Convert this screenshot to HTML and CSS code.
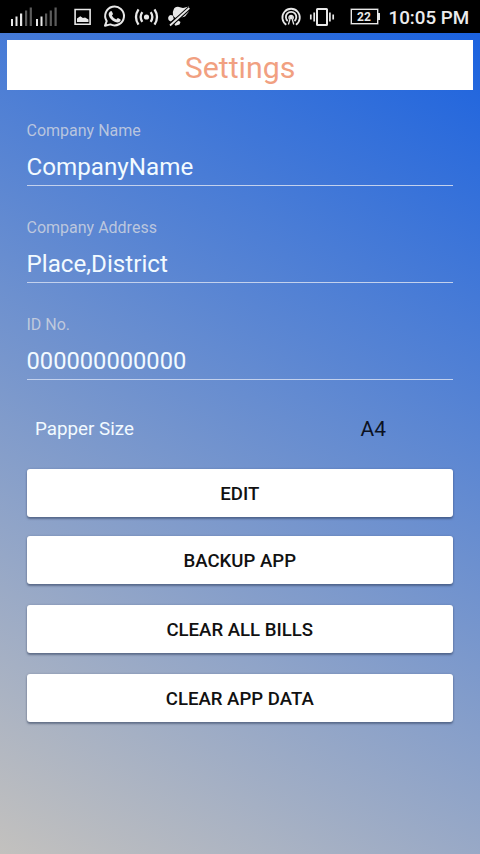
FILE: index.html
```
<!DOCTYPE html>
<html lang="en">
<head>
<meta charset="utf-8">
<title>Settings</title>
<link rel="stylesheet" href="styles.css">
</head>
<body>
<div class="screen">
  <header class="status">
    <svg class="status-icons" width="200" height="33" viewBox="0 0 200 33">
      <g fill="#e8e8e8">
        <path d="M11 19h2v7h-2zM15.500 16.500h2v9.500h-2zM20 13.500h2.200v12.500H20zM36 19h2v7h-2zM40.500 16.500h2v9.500h-2z"/>
        <path fill="#5c5c5c" d="M25 10.500h2.200v15.500H25zM29.700 7.500h2.200v18.500h-2.200zM45 13.500h2.200v12.500H45zM49.700 10.500h2.200v15.500h-2.200zM54.500 7.500h2.200v18.500h-2.200z"/>
        <path fill-rule="evenodd" d="M74.300 8.700h16.600v16.300H74.300zM75.900 10.300v13.100h13.400V10.300z"/>
        <path d="M77 22v-3.500l3.300-2.200 2.600 1.700 2.200-.6 3.400 2.100V22z"/>
      </g>
      <path d="M105 25.700l1.700-4.600a9.400 9.400 0 1 1 3.700 3.300z" fill="none" stroke="#e8e8e8" stroke-width="2" stroke-linejoin="round"/>
      <path d="M110 11.700c.8-.9 1.600-.8 2 0l.9 2c.2.7-.5 1.200-1 1.800 1 1.900 2.500 3.200 4.500 4 .7-.7 1.200-1.700 1.900-1.300l2 1c.7.5.4 1.700-.4 2.400-1.500 1.200-3.300 1-5.200.1-2.700-1.200-4.800-3.300-5.800-6-.5-1.500-.2-3.100 1.100-4z" fill="#e8e8e8"/>
      <circle cx="146.500" cy="17" r="2.600" fill="#e8e8e8"/>
      <path d="M142.300 12.200q-3.300 4.800 0 9.600M138.500 9.300q-5 7.700 0 15.400M150.700 12.200q3.300 4.800 0 9.600M154.500 9.300q5 7.700 0 15.400" fill="none" stroke="#e8e8e8" stroke-width="2.300"/>
      <g fill="#e8e8e8">
        <path d="M173.500 10q1-3.300 4.500-3.200l5 1.200 6-1.500-.5 5.500-3.500 4.500-5.500 1.500q-6 .6-6.500-3-.8-2.700.5-5z"/>
        <path d="M168.300 17q1.500-3.200 4.500-1.500l1 3.500-3 2.500q-3.200-1-2.500-4.500zM173.500 23l3.500-3.500 3.500 2.500-1 2.500-4 1.200z"/>
      </g>
      <path d="M170 25.500l19.500-17.500" stroke="#000" stroke-width="4"/>
      <path d="M170 25.500l19.300-17.500" stroke="#e8e8e8" stroke-width="1.800"/>
    </svg>
    <div class="status-right">
      <svg width="56" height="33" viewBox="280 0 56 33" fill="none" stroke="#e8e8e8" stroke-width="1.800">
        <path d="M286.300 24.700a8.700 8.700 0 1 1 9.600 0M287.700 21a5.200 5.200 0 1 1 6.800 0"/>
        <path d="M288.400 24.500l1.500-5a2.200 2.200 0 1 1 2.400 0l1.500 5" stroke-width="1.300"/>
        <circle cx="291.100" cy="17.500" r="1.700" fill="#e8e8e8" stroke="none"/>
        <rect x="317" y="9" width="10" height="16" rx=".5" stroke-width="2"/>
        <path d="M314.200 12.500v9M310.800 14.500v5M329.900 12.500v9M333.200 14.500v5" stroke-width="1.700"/>
      </svg>
      <span class="battery">22</span>
      <span class="clock">10:05 PM</span>
    </div>
  </header>
  <main class="page">
    <h1 class="title">Settings</h1>
    <div class="form">
      <div class="field"><div class="label">Company Name</div><div class="value">CompanyName</div></div>
      <div class="field"><div class="label">Company Address</div><div class="value">Place,District</div></div>
      <div class="field"><div class="label">ID No.</div><div class="value value-id">000000000000</div></div>
      <div class="paper"><span>Papper Size</span><span class="paper-value">A4</span></div>
      <div class="actions">
        <button class="action action-edit">EDIT</button>
        <button class="action">BACKUP APP</button>
        <button class="action">CLEAR ALL BILLS</button>
        <button class="action">CLEAR APP DATA</button>
      </div>
    </div>
  </main>
</div>
</body>
</html>
```
FILE: styles.css
```
* { box-sizing: border-box; }
body { margin: 0; font-family: Roboto, "Liberation Sans", sans-serif; }
.screen { width: 480px; height: 854px; display: flex; flex-direction: column; overflow: hidden; }
.status { height: 33px; flex: none; background: #000; display: flex; justify-content: space-between; }
.status-icons { display: block; }
.status-right { display: flex; align-items: center; width: 200px; }
.battery {
  position: relative; width: 27px; height: 15px; margin-left: 14.500px;
  border: 1px solid #e8e8e8; box-shadow: 0 0 0 .5px #b5b5b5; color: #e8e8e8;
  font-size: 12px; line-height: 14px; font-weight: 700; text-align: center;
}
.battery::after { content: ""; position: absolute; right: -3px; top: 3px; width: 2px; height: 7px; background: #e8e8e8; }
.clock { margin: 2px 0 0 11px; color: #ececec; font-size: 18.800px; font-weight: 500; white-space: nowrap; }
.page { flex: 1; padding: 7px 7px 0; background: linear-gradient(30.3deg, #c3c1be 0%, #1b62df 100%); }
.title { margin: 0; height: 49.500px; background: #fff; color: #f1a081; font-size: 30.300px; line-height: 55px; font-weight: 400; text-align: center; }
.form { padding: 31.500px 20px 0 19.500px; }
.field { height: 97px; }
.label { color: rgba(216, 218, 225, .78); font-size: 16px; line-height: 20px; }
.value { height: 45px; padding-top: 12px; border-bottom: 1px solid #c3d1ed; color: #f2faff; font-size: 24.200px; line-height: 28px; }
.value-id { font-size: 23.700px; }
.paper { display: flex; justify-content: space-between; align-items: center; height: 28px; padding: 0 67px 0 8.500px; color: #f2faff; font-size: 18.800px; margin-top: 3px; }
.paper-value { color: #0c1222; font-size: 21px; }
.actions { display: flex; flex-direction: column; gap: 21.300px; margin-top: 26px; }
.action { height: 48px; border: 0; border-radius: 3px; background: #fff; color: #111; font: 500 18.600px Roboto, "Liberation Sans", sans-serif; padding: 2px 0 0; box-shadow: 0 2px 2px rgba(45, 60, 90, .5), 0 0 2px rgba(45, 60, 90, .3); }
.action-edit { margin-bottom: -2.500px; }
```
